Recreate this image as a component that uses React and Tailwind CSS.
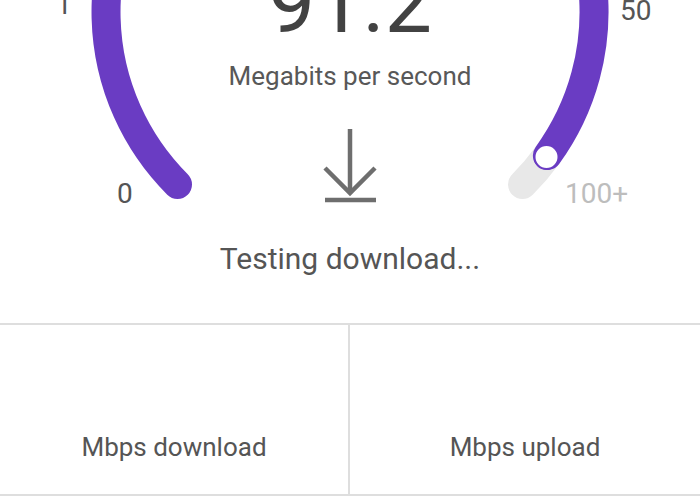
import React from "react";

const PURPLE = "#6a3cc3";

function Gauge() {
  return (
    <svg className="absolute inset-0" width="700" height="323" viewBox="0 0 700 323">
      <path d="M 547.4 155.4 A 244 244 0 0 1 522.5 184.5" fill="none" stroke="#e8e8e8" strokeWidth="29" strokeLinecap="round" />
      <path d="M 177.5 184.5 A 244 244 0 1 1 547.4 155.4" fill="none" stroke={PURPLE} strokeWidth="29" strokeLinecap="round" />
      <circle cx="546.5" cy="157" r="12" fill="#ffffff" stroke={PURPLE} strokeWidth="2" />
    </svg>
  );
}

function DownloadIcon() {
  return (
    <svg width="70" height="80" viewBox="0 0 70 80" className="mt-[35px]">
      <g stroke="#6e6e6e" strokeWidth="4.5" fill="none">
        <line x1="35" y1="3" x2="35" y2="66" />
        <polyline points="10,42 35,67 60,42" strokeLinejoin="miter" />
        <line x1="10" y1="74" x2="61" y2="74" />
      </g>
    </svg>
  );
}

export default function App() {
  return (
    <div className="w-[700px] h-[500px] overflow-hidden bg-white" style={{ fontFamily: "Roboto, 'Noto Sans', sans-serif" }}>
      <div className="relative h-[323px] overflow-hidden">
        <Gauge />
        <span className="absolute left-[56px] top-[-9px] text-[28px] leading-none text-[#555]">1</span>
        <span className="absolute left-[117px] top-[180px] text-[28px] leading-none text-[#555]">0</span>
        <span className="absolute left-[620px] top-[-3px] text-[28px] leading-none text-[#555]">50</span>
        <span className="absolute left-[565px] top-[180px] text-[28px] leading-none text-[#bdbdbd]">100+</span>
        <div className="relative flex flex-col items-center">
          <div className="mt-[-38px] text-[84px] leading-none text-[#424242]">91.2</div>
          <div className="mt-[15px] text-[26px] leading-[30px] text-[#585858]">Megabits per second</div>
          <DownloadIcon />
          <div className="mt-[35px] text-[30px] leading-[36px] text-[#555]">Testing download...</div>
        </div>
      </div>
      <div className="grid grid-cols-2 h-[173px] border-y-2 border-[#dedede]">
        <div className="flex items-end justify-center border-r-2 border-[#dedede] pb-[32px]">
          <span className="text-[26px] leading-[30px] text-[#555]">Mbps download</span>
        </div>
        <div className="flex items-end justify-center pb-[32px]">
          <span className="text-[26px] leading-[30px] text-[#555]">Mbps upload</span>
        </div>
      </div>
    </div>
  );
}
